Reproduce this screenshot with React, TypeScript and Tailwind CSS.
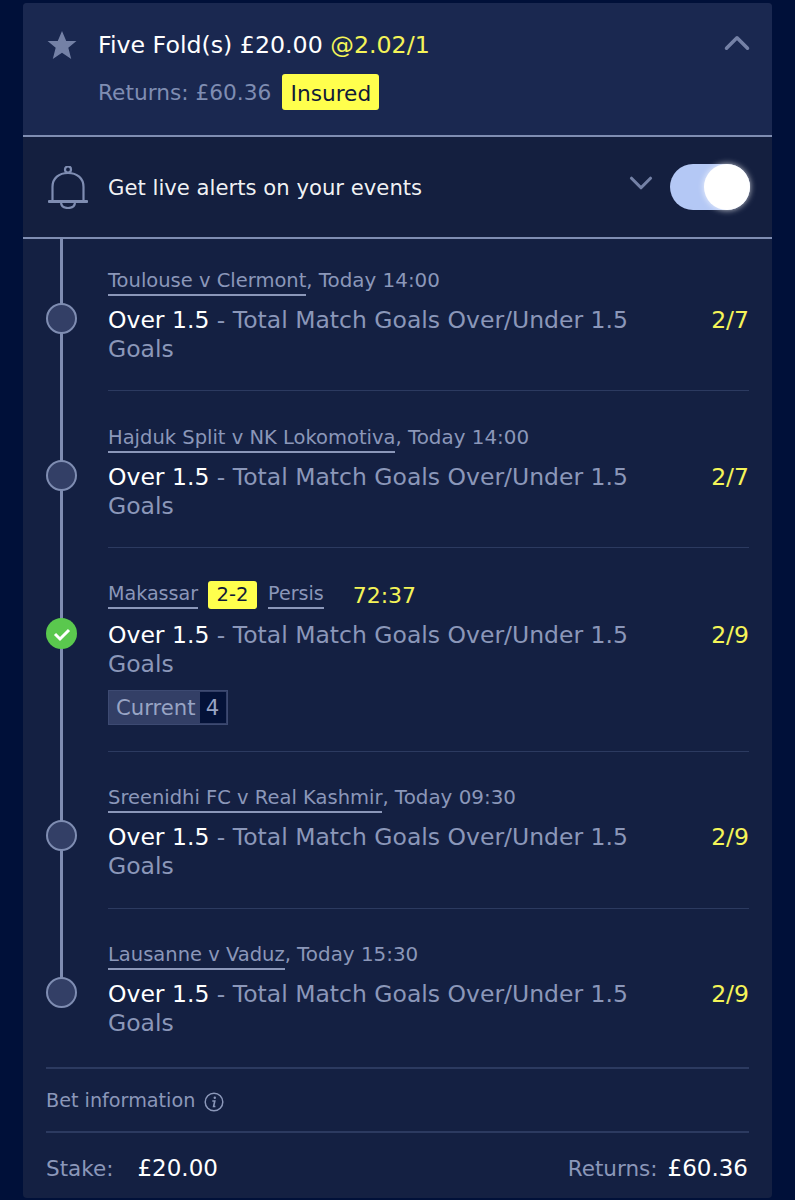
import { ChevronUp, ChevronDown } from 'lucide-react';

const legs = [
  { event: 'Toulouse v Clermont', time: 'Today 14:00', odds: '2/7', rowClass: 'h-[152px] pt-[29px]' },
  { event: 'Hajduk Split v NK Lokomotiva', time: 'Today 14:00', odds: '2/7', rowClass: 'h-[157px] pt-[34px]' },
  { live: true, odds: '2/9', rowClass: 'h-[204px] pt-[33px]' },
  { event: 'Sreenidhi FC v Real Kashmir', time: 'Today 09:30', odds: '2/9', rowClass: 'h-[157px] pt-[33px]' },
  { event: 'Lausanne v Vaduz', time: 'Today 15:30', odds: '2/9', rowClass: 'h-[158px] pt-[33px]' },
];

function BellIcon() {
  return (
    <svg width="40" height="43" viewBox="0 0 40 43" fill="none" stroke="#7f8db2" strokeWidth="2.200">
      <circle cx="20" cy="3.500" r="3" />
      <path d="M4.500 35.500V21C4.500 12 11 7 20 7s15.500 5 15.500 14v14.500" />
      <path d="M1 35.500h38" strokeWidth="2.800" strokeLinecap="round" />
      <path d="M13 36c0 4 3 6 7 6s7-2 7-6" />
    </svg>
  );
}

function InfoIcon() {
  return (
    <svg width="20" height="20" viewBox="0 0 20 20" fill="none" stroke="#8b97b9" strokeWidth="1.500">
      <circle cx="10" cy="10" r="8.800" />
      <circle cx="10.800" cy="5.800" r="1.200" fill="#8b97b9" stroke="none" />
      <path d="M8.300 9h2.500l-1.200 5.500h1.800" strokeWidth="1.600" />
    </svg>
  );
}

function Leg({ leg, last }: { leg: (typeof legs)[number]; last: boolean }) {
  return (
    <div className={`ml-[85px] mr-[23px] ${leg.rowClass} ${last ? '' : 'border-b border-[#2c3a60]'}`}>
      {leg.live ? (
        <div className="flex items-center h-[28px] text-[19.100px] text-[#8b97b9]">
          <span className="border-b-2 border-[#8b97b9] leading-[26px]">Makassar</span>
          <span className="ml-[10px] w-[49px] text-center text-[19.500px] h-[28px] leading-[28px] rounded-[3px] bg-[#ffff4d] text-[#101a38]">2-2</span>
          <span className="ml-[11px] border-b-2 border-[#8b97b9] leading-[26px]">Persis</span>
          <span className="ml-[29px] text-[#f4f458] text-[22px]">72:37</span>
        </div>
      ) : (
        <div className="h-[28px] text-[19.500px] leading-[26px] text-[#8b97b9]">
          <span className="inline-block border-b-2 border-[#8b97b9] h-[28px]">{leg.event}</span>, <span className="text-[19.900px]">{leg.time}</span>
        </div>
      )}
      <div className={`relative ${leg.live ? 'mt-[12px]' : 'mt-[10px]'} flex justify-between text-[23.500px] leading-[29px]`}>
        <div className="w-[560px] text-[#8b97b9]">
          <span className="text-white">Over 1.5</span> - Total Match Goals Over/Under 1.5 Goals
        </div>
        <div className="text-[#f4f458]">{leg.odds}</div>
        {leg.live ? (
          <div className="absolute left-[-62px] top-[-3px] w-[31px] h-[31px] rounded-full bg-[#5ac84e] flex items-center justify-center">
            <svg width="20" height="16" viewBox="0 0 20 16" fill="none" stroke="white" strokeWidth="3">
              <path d="M3 8l5 5 9-9" />
            </svg>
          </div>
        ) : (
          <div className="absolute left-[-62px] top-[-3px] w-[31px] h-[31px] rounded-full bg-[#333f66] border-2 border-[#7f8db2]" />
        )}
      </div>
      {leg.live && (
        <div className="mt-[11px] inline-flex h-[35px] items-center pl-[7px] pr-[1px] bg-[#333f66] border border-[#3d4a72] text-[21.200px] text-[#98a4c4]">
          Current
          <span className="ml-[4px] w-[26px] h-[31px] leading-[31px] text-center bg-[#041238]">4</span>
        </div>
      )}
    </div>
  );
}

export default function App() {
  return (
    <div className="h-[1200px] overflow-hidden bg-[#001039] pt-[3px] px-[23px] font-['DejaVu_Sans',sans-serif]">
      <div className="w-[749px] h-[1195px] rounded-[4px] overflow-hidden bg-[#142042]">
        {/* header */}
        <div className="relative h-[132px] bg-[#1a2850] pl-[75px] pt-[26px]">
          <svg className="absolute left-[24px] top-[28px]" width="30" height="28" viewBox="0 0 32 31" fill="#7481a6">
            <path d="M16 0l4.700 11h11.300l-9 7.500 3.200 12.500-10.200-7-10.200 7 3.200-12.500-9-7.500h11.300z" />
          </svg>
          <div className="text-[23.700px] leading-[32px] text-white">
            Five Fold(s) £20.00 <span className="text-[#f4f458]">@2.02/1</span>
          </div>
          <div className="mt-[13px] flex items-center text-[21.700px] text-[#7f8db2]">
            <span className="mt-[2px]">Returns: £60.36</span>
            <span className="ml-[11px] w-[97px] text-center h-[36px] leading-[40px] rounded-[3px] bg-[#ffff4d] text-[#101a38]">Insured</span>
          </div>
          <ChevronUp className="absolute right-[14px] top-[19px]" size={42} stroke="#7481a6" strokeWidth={2} />
        </div>
        <div className="h-[2px] bg-[#7f8db2]" />
        {/* alerts */}
        <div className="relative h-[100px] flex items-center pl-[25px] bg-[#141f3f]">
          <BellIcon />
          <span className="ml-[20px] mt-[2px] text-[21.200px] text-white/95">Get live alerts on your events</span>
          <ChevronDown className="ml-auto mb-[8px] mr-[10px]" size={38} stroke="#7481a6" strokeWidth={2} />
          <div className="relative w-[80px] h-[46px] mr-[22px] rounded-full bg-[#b4c8f5]">
            <div className="absolute right-0 top-0 w-[46px] h-[46px] rounded-full bg-white shadow-[0_0_6px_rgba(255,255,255,0.8)]" />
          </div>
        </div>
        <div className="h-[2px] bg-[#7f8db2]" />
        {/* legs */}
        <div className="relative">
          <div className="absolute left-[37px] top-0 w-[3px] h-[740px] bg-[#7f8db2]" />
          {legs.map((leg, i) => (
            <Leg key={i} leg={leg} last={i === legs.length - 1} />
          ))}
        </div>
        {/* bet info */}
        <div className="ml-[23px] mr-[23px] h-[66px] pt-[3px] flex items-center border-y-2 border-[#2c3a60] text-[19.200px] text-[#8b97b9]">
          Bet information
          <span className="ml-[9px]"><InfoIcon /></span>
        </div>
        <div className="mx-[23px] mr-[24px] pt-[18px] flex justify-between text-[21.500px] text-[#8b97b9]">
          <span>
            Stake:<span className="ml-[24px] text-[23px] text-white">£20.00</span>
          </span>
          <span>
            Returns:<span className="ml-[10px] text-[23px] text-white">£60.36</span>
          </span>
        </div>
      </div>
    </div>
  );
}
